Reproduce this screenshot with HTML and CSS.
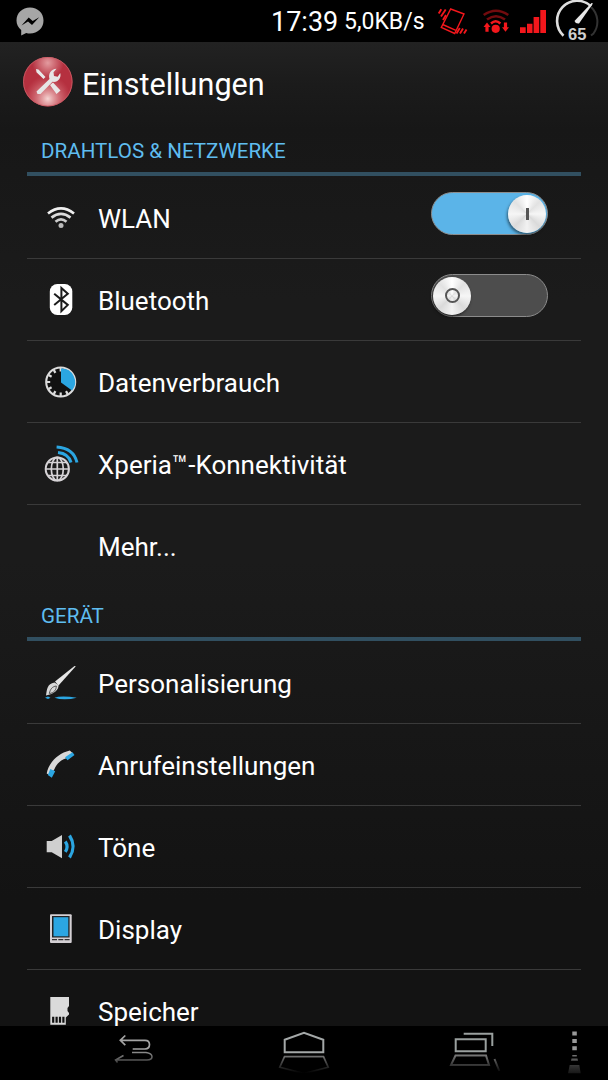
FILE: index.html
```html
<!DOCTYPE html>
<html lang="de">
  <head>
    <meta charset="UTF-8" />
    <meta name="viewport" content="width=device-width, initial-scale=1.0" />
    <title>Einstellungen</title>
    <link rel="stylesheet" href="styles.css">
  </head>
  <body>
    <div class="phone">
      <div class="statusbar">
        <svg class="messenger" width="28" height="42" viewBox="0 0 28 42">
          <path d="M14 7.5C6.3 7.5.5 13 .5 20.5c0 4 1.7 7 4.7 9.5v5.4l5-2.5c1.2.4 2.5.6 3.8.6 7.7 0 13.5-5.5 13.5-13S21.7 7.5 14 7.5z" fill="#a6a6a6"/>
          <path d="M5.5 25.5l7.2-8 4 3.5 6.5-3.7-7.2 7.7-4-3.5z" fill="#000"/>
        </svg>
        <span class="time">17:39</span>
        <span class="speed">5,0KB/s</span>
        <svg class="vibrate" width="32" height="42" viewBox="0 0 32 42" fill="none" stroke="#f3171c" stroke-width="1.4">
          <path d="M14.7 9L28 14 18.7 33.5 5.3 27.5zM6.7 24.5l13.2 5.8"/>
          <path stroke-width="1.9" d="M2.7 13.5L5.3 9.2M5 16.5l4.7-7M7 20l3-5M20.5 33.5l3.3-5.5M24 33.5l3-5M28 33.5l2.5-4"/>
        </svg>
        <svg class="wifi-status" width="28" height="42" viewBox="0 0 28 42" fill="none">
          <path d="M1.7 15q12.3-8.5 24.6 0M5 19.5q9-6.5 18 0" stroke="#720b0e" stroke-width="2.6"/>
          <path d="M9 23.5q4.7-4.4 9.4 0" stroke="#f3171c" stroke-width="2.4"/>
          <circle cx="13.7" cy="28.8" r="4.1" fill="#f3171c"/>
          <path d="M5 22.5L8.5 27H6.6v4.7H3.4V27H1.5zM23.5 31.7L20 27.2h1.9v-4.7h3.2v4.7H27z" fill="#f3171c"/>
        </svg>
        <svg class="signal" width="26" height="42" viewBox="0 0 26 42" fill="#f3171c">
          <path d="M0 27.3h5.7V33H0zM7 23.7h5.5V33H7zM13.6 17h5.6v16h-5.6zM20.3 10H26v23h-5.7z"/>
        </svg>
        <svg class="gauge" width="44" height="42" viewBox="0 0 44 42">
          <path d="M36 7a20 20 0 0 1 2.5 26.5l-2.5 2" fill="none" stroke="#333" stroke-width="2"/>
          <path d="M8.5 35.7A19.7 19.7 0 0 1 36 6.2" fill="none" stroke="#dedede" stroke-width="2.6"/>
          <path d="M38 3.5L36.5 3 19.5 21q1 3 4.5 2.500z" fill="#e8e8e8"/>
          <text class="gauge-text" x="22.3" y="39.7" text-anchor="middle">65</text>
        </svg>
      </div>

      <div class="titlebar">
        <svg width="50" height="50" viewBox="0 0 50 50">
          <defs>
            <radialGradient id="shineTop" cx="50%" cy="12%" r="32%">
              <stop offset="0" stop-color="#e39b9f"/>
              <stop offset="1" stop-color="#e39b9f" stop-opacity="0"/>
            </radialGradient>
            <radialGradient id="shineBottom" cx="50%" cy="85%" r="48%">
              <stop offset="0" stop-color="#f5d5d3"/>
              <stop offset="1" stop-color="#e07a80" stop-opacity="0"/>
            </radialGradient>
          </defs>
          <circle cx="24.8" cy="24.7" r="24.7" fill="#b5303f"/>
          <circle cx="24.8" cy="24.7" r="24.7" fill="url(#shineTop)"/>
          <circle cx="24.8" cy="24.7" r="24.3" fill="url(#shineBottom)" stroke="#c96068" stroke-width=".8"/>
          <path d="M13 12l2.5.5 7 7.5-2 2-7-6.8zM27 28l3-2.5 7.500 8-4 3.500z" fill="#e8e8e8"/>
          <path d="M13.5 34.5L26.5 22c-1.5-5 1.5-10 7-10.2l-3 3.5.5 3.7 3.7.8 2.5-3.8c1.5 5-2.5 9.8-7.7 8.8L17.5 37h-3z" fill="#e6e6e6"/>
        </svg>
        <h1>Einstellungen</h1>
      </div>

      <div class="list">
        <h2>DRAHTLOS &amp; NETZWERKE</h2>
        <ul>
          <li>
            <svg class="icon" viewBox="0 0 40 41" fill="none" stroke="#dcdcdc" stroke-width="2.7">
              <path d="M7 16.5q13-10.2 26 0" stroke="#f0f0f0"/>
              <path d="M10.5 20.6q9.5-7.6 19 0"/>
              <path d="M14.5 24.7q5.5-4.6 11 0" stroke="#ccc"/>
              <circle cx="20" cy="28.6" r="2.5" fill="#bbb" stroke="none"/>
            </svg>
            <span>WLAN</span>
            <div class="switch on"><div class="knob"><i></i></div></div>
          </li>
          <li>
            <svg class="icon" viewBox="0 0 40 41">
              <rect x="8.8" y="5" width="22.5" height="31" rx="7.5" fill="#fff"/>
              <path d="M13.2 14.7l13.6 11.2-6.4 6.2V9l6.4 5.7-13.6 11.2" fill="none" stroke="#1b1b1b" stroke-width="2"/>
            </svg>
            <span>Bluetooth</span>
            <div class="switch"><div class="knob"><b></b></div></div>
          </li>
          <li>
            <svg class="icon" viewBox="0 0 40 41">
              <circle cx="19.7" cy="21" r="14.5" fill="#111" stroke="#dcdcdc" stroke-width="2.1"/>
              <path d="M19.7 7v3.5M19.7 35v-3.5M5.7 21h3.5M7.6 14l3 1.7M12.7 8.9l1.7 3M7.6 28l3-1.7M12.7 33.1l1.7-3M26.7 33.1l-1.7-3" stroke="#dcdcdc" stroke-width="2.2"/>
              <path d="M20 21.5V7.6a13.4 13.4 0 0 1 11 21.9z" fill="#2ba6e2"/>
            </svg>
            <span>Datenverbrauch</span>
          </li>
          <li>
            <svg class="icon" viewBox="0 0 40 41" fill="none">
              <g stroke="#d6d3d6" stroke-width="1.7">
                <circle cx="16.3" cy="26" r="11.6" stroke-width="2"/>
                <ellipse cx="16.3" cy="26" rx="6" ry="11.6"/>
                <path d="M16.3 14v24M4.5 26h23.6M7 19.5h18.6M7 32.5h18.6"/>
              </g>
              <path d="M15.6 4Q32.5 5 36 19.5M17 9.5Q27.5 10.5 30 19.5" stroke="#2ba6e2" stroke-width="3"/>
            </svg>
            <span>Xperia™-Konnektivität</span>
          </li>
          <li>
            <div class="icon"></div>
            <span>Mehr...</span>
          </li>
        </ul>

        <h2>GERÄT</h2>
        <ul>
          <li>
            <svg class="icon" viewBox="0 0 40 41">
              <path d="M34.8 4.3L33.5 4 14 19.5l3.5 4z" fill="#e6e6e6"/>
              <path d="M13.5 20.5l4 2.5c.5 5-4.5 9-12.5 10.5C6 27 6 22 13.5 20.5z" fill="#d8d8d8"/>
              <path d="M8.3 31.5c5-.5 7-4 7-7.5-4 .5-6 3-7 7.5z" fill="none" stroke="#555" stroke-width="1"/>
              <path d="M4 35.7l3-1.2 2.5 1.2L7 37zM13.5 35.7q3-1.3 9-1.3t13.3 1.3q-6 1.5-12 1.500t-10.300-1.500z" fill="#2ba6e2"/>
            </svg>
            <span>Personalisierung</span>
          </li>
          <li>
            <svg class="icon" viewBox="0 0 40 41">
              <path d="M5.7 29.5C7.5 19.5 16 9.5 28.8 6.5l3 2.7-6.5 5C19.500 16 15.500 20 13.500 25l-4 6.500z" fill="#d8d8d8"/>
              <path d="M24 13.200l7.500-5 2 2.800-7 5.200zM9.300 25l4.900 2.200-3.400 6.500-4-2.700z" fill="#2ba6e2"/>
            </svg>
            <span>Anrufeinstellungen</span>
          </li>
          <li>
            <svg class="icon" viewBox="0 0 40 41">
              <path d="M5.7 15h5L21 9v23.3l-10.300-6h-5z" fill="#cfcfcf"/>
              <path d="M24.3 15.5q3.5 5.2 0 10.4M28.5 9.5q7.2 11 0 22" fill="none" stroke="#2ba6e2" stroke-width="3.2"/>
            </svg>
            <span>Töne</span>
          </li>
          <li>
            <svg class="icon" viewBox="0 0 40 41">
              <rect x="9" y="6.2" width="21.7" height="28.8" rx="1" fill="#d4d0d4"/>
              <rect x="11" y="8" width="17.6" height="21.5" fill="#222"/>
              <rect x="12.5" y="9.2" width="14.8" height="19.1" fill="#2ba6e2"/>
              <path d="M11 31.6h5M17.3 31.6h5M23.6 31.6h5" stroke="#333" stroke-width="1.4"/>
            </svg>
            <span>Display</span>
          </li>
          <li>
            <svg class="icon" viewBox="0 0 40 41">
              <path d="M9.3 7H28v9l-1.5 2v3l1.5 2v1.5l-3.2 3v7.2H9.3z" fill="#dadada"/>
              <path d="M12.2 26.8v6M15.6 26.8v6M19 26.8v6M22.4 26.8v6" stroke="#111" stroke-width="2.2"/>
            </svg>
            <span>Speicher</span>
          </li>
        </ul>
      </div>

      <div class="navbar">
        <svg class="back" width="42" height="54" viewBox="0 0 42 54" fill="none">
          <path d="M12.3 9.5l-5 4.8 5 4.8M7.5 14.3H32q4.5 0 4.5 4.3T32 23H19.7" stroke="#a4a4a4" stroke-width="1.7"/>
          <path d="M19 26.5h14q6 1 6 4.2T34 34H2.5M10.5 29.5l-8 4.5 2 2.5" stroke="url(#fade)" stroke-width="1.5"/>
        </svg>
        <svg class="home" width="56" height="54" viewBox="0 0 56 54" fill="none">
          <defs>
            <linearGradient id="fade" gradientUnits="userSpaceOnUse" x1="0" y1="26" x2="0" y2="47">
              <stop offset="0" stop-color="#8c8c8c"/>
              <stop offset="1" stop-color="#000"/>
            </linearGradient>
          </defs>
          <path d="M8.7 13.8L28 6.8l19.3 7v12.5H8.7z" stroke="#a4a8a8" stroke-width="2"/>
          <path d="M8.5 30.7h39l4.7 10.5L28 47.5 3.8 41.2z" stroke="url(#fade)" stroke-width="1.7"/>
        </svg>
        <svg class="recents" width="56" height="54" viewBox="0 0 56 54" fill="none">
          <path d="M8.7 13.3h30v12h-30zM16.7 7.7h28.6V20" stroke="#9aa09f" stroke-width="2"/>
          <path d="M8.5 29.5H39l3 9.5H4zM47.5 33l4.8 12" stroke="url(#fade)" stroke-width="2"/>
        </svg>
        <svg class="more" width="18" height="54" viewBox="0 0 18 54">
          <defs>
            <linearGradient id="fade2" gradientUnits="userSpaceOnUse" x1="0" y1="28" x2="0" y2="49">
              <stop offset="0" stop-color="#777"/>
              <stop offset=".6" stop-color="#303030"/>
              <stop offset="1" stop-color="#111"/>
            </linearGradient>
          </defs>
          <path d="M6.3 5.5h4.5v4H6.3zM6.3 13h4.5v4H6.3zM6.3 20.3h4.5v4H6.3z" fill="#999"/>
          <path d="M6.3 29h4.5v1.6H6.3zM5.5 32.5h6l.5 2.2H5zM3.7 39h9.6l1.4 8.3H2z" fill="url(#fade2)"/>
        </svg>
      </div>
    </div>
  </body>
</html>
```
FILE: styles.css
```css
body {
  margin: 0;
  background-color: #000;
  color: #fff;
  font-family: Roboto, sans-serif;
}
.phone {
  display: flex;
  flex-direction: column;
  width: 608px;
  height: 1080px;
  overflow: hidden;
  background: linear-gradient(#222 42px, #1b1b1b 85px, #171717 130px, #1b1b1b 300px, #1b1b1b 560px, #131313 900px, #131313 1026px);
}
svg {
  display: block;
  flex-shrink: 0;
}
.statusbar {
  display: flex;
  align-items: center;
  height: 42px;
  background-color: #000;
}
.messenger {
  margin-left: 16px;
  margin-right: auto;
}
.time {
  font-size: 27px;
  margin-right: 6px;
  width: 67px;
  line-height: 42px;
  padding-top: 2px;
  white-space: nowrap;
}
.speed {
  font-size: 23px;
  width: 92px;
  line-height: 42px;
  padding-top: 2px;
  white-space: nowrap;
}
.wifi-status {
  margin-left: 14px;
}
.signal {
  margin-left: 10px;
}
.gauge {
  margin-left: 9px;
  margin-right: 9px;
}
.gauge-text {
  font-family: "Liberation Sans", sans-serif;
  font-size: 16.5px;
  font-weight: 700;
  fill: #d0d0d0;
}
.titlebar {
  display: flex;
  align-items: center;
  height: 79px;
  padding-left: 23px;
}
.titlebar h1 {
  margin: 6px 0 0 9px;
  font-size: 30.6px;
  font-weight: 400;
}
.list {
  flex: 1;
  min-height: 0;
  overflow: hidden;
  padding: 0 27px;
}
.list h2 {
  box-sizing: border-box;
  height: 55px;
  margin: 0;
  padding: 2px 14px 0;
  border-bottom: 4px solid #314f60;
  color: #5fbdf0;
  font-size: 20.6px;
  font-weight: 400;
  line-height: 56px;
}
ul {
  margin: 0;
  padding: 0;
  list-style: none;
}
li {
  display: flex;
  align-items: center;
  box-sizing: border-box;
  height: 82px;
  padding: 0 33px 0 14px;
  border-top: 1px solid #3a3a3a;
}
li:first-child {
  border-top-color: transparent;
}
li span {
  flex: 1;
  padding-top: 3px;
  font-size: 26px;
}
.icon {
  width: 40px;
  height: 41px;
  margin-right: 17px;
}
.switch {
  display: flex;
  align-items: center;
  box-sizing: border-box;
  width: 117px;
  height: 43px;
  margin-bottom: 8px;
  padding: 0 1px;
  border: 1px solid #8c8c8c;
  border-radius: 22px;
  background-color: #4d4d4d;
}
.switch.on {
  justify-content: flex-end;
  background-color: #5bb4e8;
}
.knob {
  display: flex;
  align-items: center;
  justify-content: center;
  width: 38px;
  height: 38px;
  border-radius: 50%;
  background: conic-gradient(#fff, #e2e2e2 45deg, #f6f6f6 90deg, #dadada 135deg, #f2f2f2 180deg, #dadada 225deg, #f6f6f6 270deg, #e2e2e2 315deg, #fff);
  box-shadow: -1px 2px 3px rgba(0, 0, 0, 0.5);
}
.knob i {
  width: 3px;
  height: 12px;
  background-color: #555;
}
.knob b {
  width: 11px;
  height: 11px;
  border: 2px solid #555;
  border-radius: 50%;
}
.navbar {
  display: flex;
  height: 54px;
  background-color: #000;
}
.back {
  margin-left: 113px;
}
.home {
  margin-left: 121px;
}
.recents {
  margin-left: 115px;
}
.more {
  margin-left: 63px;
}
```
